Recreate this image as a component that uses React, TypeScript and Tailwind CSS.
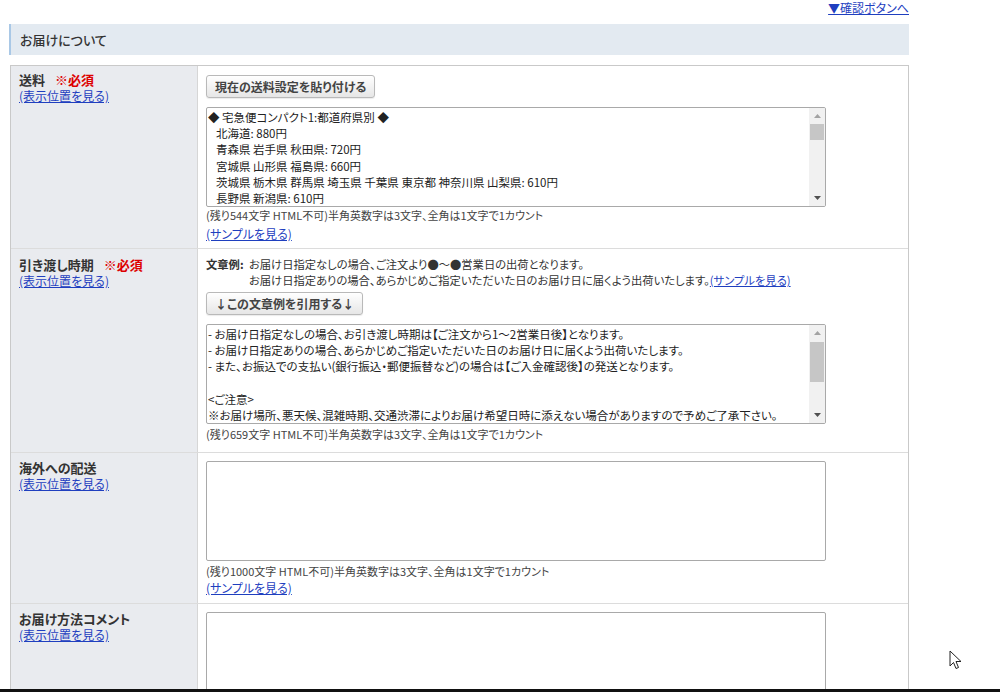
import React from 'react';

const jp = "font-['Noto_Sans_CJK_JP','Noto_Sans',sans-serif] [font-feature-settings:'palt']";

const ViewLink: React.FC<{ children: React.ReactNode; className?: string }> = ({ children, className = '' }) => (
    <a href="#" className={`text-[#1f3fbf] underline underline-offset-1 ${className}`}>{children}</a>
);

const FakeScrollbar: React.FC<{ thumbTop: number; thumbHeight: number }> = ({ thumbTop, thumbHeight }) => (
    <div className="w-[16px] shrink-0 bg-[#f1f1f1] flex flex-col items-center">
        <div className="h-[16px] flex items-center justify-center">
            <svg width="7" height="4" viewBox="0 0 7 4"><path d="M3.5 0 L7 4 L0 4 Z" fill="#a3a3a3" /></svg>
        </div>
        <div className="flex-1 w-full px-[1px]">
            <div className="w-full bg-[#c6c6c6]" style={{ marginTop: thumbTop, height: thumbHeight }} />
        </div>
        <div className="h-[16px] flex items-center justify-center">
            <svg width="7" height="4" viewBox="0 0 7 4"><path d="M0 0 L7 0 L3.5 4 Z" fill="#505050" /></svg>
        </div>
    </div>
);

// lines starting with a space are shown indented, like the original textarea
const TextBox: React.FC<{ lines?: string[]; thumb?: [number, number] }> = ({ lines, thumb }) => (
    <div className="w-[620px] h-[100px] border border-[#a9a9a9] rounded-[2px] bg-white flex overflow-hidden">
        <div className="flex-1 pl-[1px] pt-[1px] text-[11.5px] leading-[16.2px] text-[#222] whitespace-pre overflow-hidden">
            {lines?.map((l, i) => (
                <div key={i} className={`h-[16.2px] ${l.startsWith(' ') ? 'pl-[8px]' : ''}`}>{l.trimStart()}</div>
            ))}
        </div>
        {thumb && <FakeScrollbar thumbTop={thumb[0]} thumbHeight={thumb[1]} />}
    </div>
);

const Btn: React.FC<{ children: React.ReactNode }> = ({ children }) => (
    <button className="block h-[23px] px-[8px] border border-[#b9b9b9] rounded-[3px] bg-gradient-to-b from-white to-[#e6e6e6] text-[12px] font-bold text-[#444] leading-none shadow-[0_1px_1px_rgba(0,0,0,0.08)]">
        {children}
    </button>
);

const Count: React.FC<{ rest: number; className?: string }> = ({ rest, className = '' }) => (
    <div className={`text-[11px] leading-[14px] text-[#444] ${className}`}>
        (残り{rest}文字 HTML不可)半角英数字は3文字、全角は1文字で1カウント
    </div>
);

const Label: React.FC<{ title: string; required?: boolean; pt: string }> = ({ title, required, pt }) => (
    <div className={`bg-[#e9ebef] border-r border-[#d6d6d6] pl-[8px] ${pt}`}>
        <div className="text-[13px] leading-[16px] font-bold text-[#333]">
            {title}
            {required && <span className="text-[#dd0000] ml-[10px]">※必須</span>}
        </div>
        <ViewLink className="text-[12px] leading-[15px] block w-fit">(表示位置を見る)</ViewLink>
    </div>
);

const shippingLines = [
    '◆ 宅急便コンパクト1:都道府県別 ◆',
    ' 北海道: 880円',
    ' 青森県 岩手県 秋田県: 720円',
    ' 宮城県 山形県 福島県: 660円',
    ' 茨城県 栃木県 群馬県 埼玉県 千葉県 東京都 神奈川県 山梨県: 610円',
    ' 長野県 新潟県: 610円',
];

const handoverLines = [
    '- お届け日指定なしの場合、お引き渡し時期は【ご注文から1～2営業日後】となります。',
    '- お届け日指定ありの場合、あらかじめご指定いただいた日のお届け日に届くよう出荷いたします。',
    '- また、お振込での支払い(銀行振込・郵便振替など)の場合は【ご入金確認後】の発送となります。',
    '',
    '<ご注意>',
    '※お届け場所、悪天候、混雑時期、交通渋滞によりお届け希望日時に添えない場合がありますので予めご了承下さい。',
];

export default function App() {
    return (
        <div className={`relative w-[1000px] h-[692px] overflow-hidden bg-white flex flex-col ${jp}`}>
            {/* top link */}
            <div className="h-[24px] w-[909px] flex justify-end pt-[1px]">
                <ViewLink className="text-[12px] leading-[13px] h-fit">▼確認ボタンへ</ViewLink>
            </div>

            {/* section header */}
            <div className="ml-[9px] w-[900px] h-[31px] bg-[#e3eaf1] border-l-2 border-[#a9c8e6] pl-[9px] flex items-center">
                <span className="text-[13px] font-medium text-[#333]">お届けについて</span>
            </div>

            {/* form table */}
            <div className="mt-[10px] ml-[10px] w-[899px] flex-1 min-h-0 border border-b-0 border-[#c9c9c9] flex flex-col">
                {/* 送料 */}
                <div className="grid grid-cols-[187px_1fr] h-[183px] border-b border-[#dcdcdc] shrink-0">
                    <Label title="送料" required pt="pt-[6px]" />
                    <div className="pl-[8px] pt-[9px]">
                        <Btn>現在の送料設定を貼り付ける</Btn>
                        <div className="mt-[9px]">
                            <TextBox lines={shippingLines} thumb={[0, 16]} />
                        </div>
                        <Count rest={544} className="mt-[1px]" />
                        <ViewLink className="text-[12px] leading-[16px] block w-fit mt-[4px]">(サンプルを見る)</ViewLink>
                    </div>
                </div>

                {/* 引き渡し時期 */}
                <div className="grid grid-cols-[187px_1fr] h-[204px] border-b border-[#dcdcdc] shrink-0">
                    <Label title="引き渡し時期" required pt="pt-[8px]" />
                    <div className="pl-[8px] pt-[7px]">
                        <div className="text-[11.3px] leading-[16px] text-[#333]">
                            <div className="flex">
                                <span className="font-bold w-[43px] shrink-0">文章例:</span>
                                <span>お届け日指定なしの場合、ご注文より●～●営業日の出荷となります。</span>
                            </div>
                            <div className="pl-[43px]">
                                お届け日指定ありの場合、あらかじめご指定いただいた日のお届け日に届くよう出荷いたします。
                                <ViewLink>(サンプルを見る)</ViewLink>
                            </div>
                        </div>
                        <div className="mt-[4px]">
                            <Btn>↓この文章例を引用する↓</Btn>
                        </div>
                        <div className="mt-[9px]">
                            <TextBox lines={handoverLines} thumb={[1, 40]} />
                        </div>
                        <Count rest={659} className="mt-[3px]" />
                    </div>
                </div>

                {/* 海外への配送 */}
                <div className="grid grid-cols-[187px_1fr] h-[151px] border-b border-[#dcdcdc] shrink-0">
                    <Label title="海外への配送" pt="pt-[7px]" />
                    <div className="pl-[8px] pt-[8px]">
                        <TextBox />
                        <Count rest={1000} className="mt-[3px]" />
                        <ViewLink className="text-[12px] leading-[16px] block w-fit mt-[2px]">(サンプルを見る)</ViewLink>
                    </div>
                </div>

                {/* お届け方法コメント */}
                <div className="grid grid-cols-[187px_1fr] flex-1 min-h-0">
                    <Label title="お届け方法コメント" pt="pt-[7px]" />
                    <div className="pl-[8px] pt-[8px]">
                        <TextBox />
                    </div>
                </div>
            </div>

            <div className="h-[3px] bg-[#111] shrink-0" />

            {/* mouse pointer */}
            <svg className="absolute left-[949px] top-[650px]" width="14" height="20" viewBox="0 0 14 20">
                <path d="M1 1 L1 16 L4.5 12.5 L7 18.5 L9.5 17.5 L7 11.5 L12 11.5 Z" fill="white" stroke="#222" strokeWidth="1" strokeLinejoin="round" />
            </svg>
        </div>
    );
}
